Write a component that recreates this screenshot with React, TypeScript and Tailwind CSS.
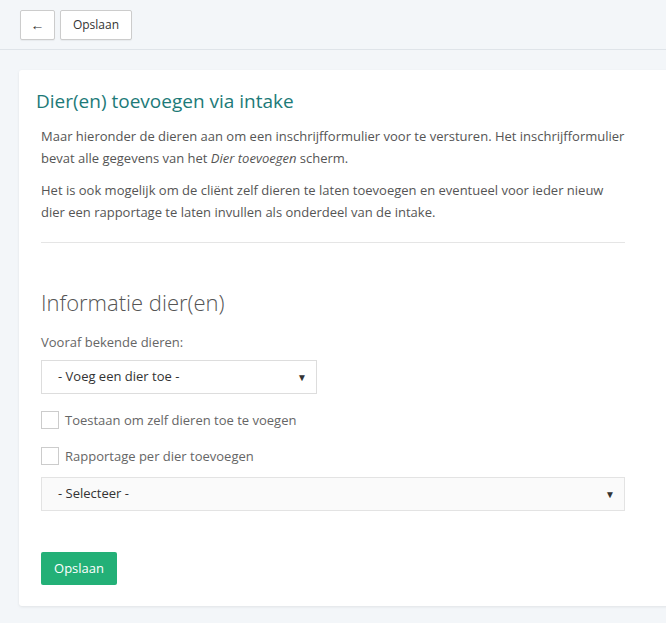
export default function App() {
  return (
    <div className="min-h-[623px] bg-[#f3f6f9] font-['Open_Sans',sans-serif] text-[13px] text-[#555] overflow-hidden">
      <div className="flex h-[50px] items-center gap-[5px] border-b border-[#dfe4e9] pl-[20px]">
        <button className="h-[30px] w-[35px] rounded-[2px] border border-[#ccc] bg-white text-[14px] text-[#333] shadow-[0_1px_1px_rgba(0,0,0,0.05)]">
          ←
        </button>
        <button className="h-[30px] w-[72px] rounded-[2px] border border-[#ccc] bg-white text-[12px] text-[#333] shadow-[0_1px_1px_rgba(0,0,0,0.05)]">
          Opslaan
        </button>
      </div>

      <div className="ml-[19px] mt-[20px] w-[660px] rounded-l-[3px] bg-white pb-[21px] shadow-[0_1px_3px_rgba(0,0,0,0.08)]">
        <h2 className="px-[17px] pt-[17px] text-[19px] leading-[28px] text-[#1d7a78]">
          Dier(en) toevoegen via intake
        </h2>

        <div className="w-[606px] pl-[22px] pt-[10px]">
          <p className="leading-[22px]">
            Maar hieronder de dieren aan om een inschrijfformulier voor te versturen. Het inschrijfformulier
            bevat alle gegevens van het <em>Dier toevoegen</em> scherm.
          </p>
          <p className="mt-[10px] leading-[22px]">
            Het is ook mogelijk om de cliënt zelf dieren te laten toevoegen en eventueel voor ieder nieuw
            dier een rapportage te laten invullen als onderdeel van de intake.
          </p>
          <div className="mt-[19px] h-px w-[584px] bg-[#e5e5e5]" />

          <h3 className="mt-[44px] text-[22px] font-light leading-[30px] text-[#555]">Informatie dier(en)</h3>

          <div className="mt-[15px] leading-[20px] text-[#666]">Vooraf bekende dieren:</div>

          <div className="mt-[8px] flex h-[34px] w-[276px] items-center justify-between border border-[#ddd] bg-white pl-[16px] pr-[9px] text-[#333]">
            <span>- Voeg een dier toe -</span>
            <span className="text-[10px] text-[#333]">▼</span>
          </div>

          <label className="mt-[17px] flex items-center gap-[6px] leading-[18px] text-[#666]">
            <span className="h-[18px] w-[18px] border border-[#ccc] bg-white" />
            Toestaan om zelf dieren toe te voegen
          </label>
          <label className="mt-[18px] flex items-center gap-[6px] leading-[18px] text-[#666]">
            <span className="h-[18px] w-[18px] border border-[#ccc] bg-white" />
            Rapportage per dier toevoegen
          </label>

          <div className="mt-[12px] flex h-[34px] w-[584px] items-center justify-between border border-[#e3e3e3] bg-[#fafafa] pl-[16px] pr-[9px] text-[#333]">
            <span>- Selecteer -</span>
            <span className="text-[10px] text-[#333]">▼</span>
          </div>

          <button className="mt-[41px] h-[33px] w-[76px] rounded-[2px] bg-[#23b077] text-[13px] text-white">
            Opslaan
          </button>
        </div>
      </div>
    </div>
  );
}
